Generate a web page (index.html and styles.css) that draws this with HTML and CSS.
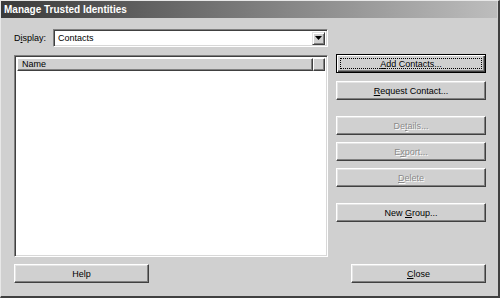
FILE: index.html
```html
<!DOCTYPE html>
<html lang="en">
<head>
    <meta charset="UTF-8" />
    <title>Manage Trusted Identities</title>
    <link rel="stylesheet" href="styles.css">
</head>
<body>

<div class="window">
    <div class="titlebar">Manage Trusted Identities</div>

    <div class="main">
        <div class="left">
            <div class="display-row">
                <label class="label">D<u>i</u>splay:</label>
                <div class="combo">
                    <span class="combo-text">Contacts</span>
                    <span class="combo-btn">
                        <svg width="7" height="4" viewBox="0 0 7 4"><path d="M0 0h7L3.5 4z" fill="#000"/></svg>
                    </span>
                </div>
            </div>
            <div class="list">
                <div class="list-head">
                    <span class="col-name">Name</span>
                    <span class="col-rest"></span>
                </div>
            </div>
        </div>

        <div class="right">
            <button class="btn default"><span class="focus"><u>A</u>dd Contacts...</span></button>
            <button class="btn gap-s"><u>R</u>equest Contact...</button>
            <button class="btn gap-l" disabled>De<u>t</u>ails...</button>
            <button class="btn gap-m" disabled>E<u>x</u>port...</button>
            <button class="btn gap-m" disabled><u>D</u>elete</button>
            <button class="btn gap-l">New <u>G</u>roup...</button>
        </div>
    </div>

    <div class="footer">
        <button class="btn wide">Help</button>
        <button class="btn wide"><u>C</u>lose</button>
    </div>
</div>

</body>
</html>
```

FILE: styles.css
```css
* {
    margin: 0;
    padding: 0;
    box-sizing: border-box;
}
body {
    background-color: #d0d0d0;
    font-family: "Liberation Sans", Arial, sans-serif;
    font-size: 9px;
    color: #000;
}
u {
    text-decoration: underline;
    text-underline-offset: 1px;
}
.window {
    width: 500px;
    height: 298px;
    background-color: #d0d0d0;
    border-top: 1px solid #e8e8e8;
    border-left: 1px solid #e8e8e8;
    border-right: 2px solid #404040;
    border-bottom: 2px solid #404040;
}
.titlebar {
    height: 17px;
    margin-right: 1px;
    padding-left: 3px;
    line-height: 17px;
    font-size: 10px;
    font-weight: bold;
    color: #fff;
    background: linear-gradient(to right, #3a3a3a, #bdbdbd);
}
.main {
    display: flex;
    padding: 11px 0 0 13px;
}
.left {
    width: 314px;
}
.display-row {
    display: flex;
    align-items: center;
    height: 18px;
}
.label {
    width: 39px;
}
.combo {
    flex: 1;
    height: 18px;
    display: flex;
    align-items: center;
    background-color: #fff;
    border-top: 1px solid #808080;
    border-left: 1px solid #808080;
    border-right: 1px solid #fff;
    border-bottom: 1px solid #fff;
    box-shadow: inset 1px 1px 0 #404040, inset -1px -1px 0 #d8d8d8;
    padding: 2px;
}
.combo-text {
    flex: 1;
    padding-left: 2px;
}
.combo-btn {
    width: 13px;
    height: 13px;
    display: flex;
    align-items: center;
    justify-content: center;
    background-color: #d0d0d0;
    border-top: 1px solid #e0e0e0;
    border-left: 1px solid #e0e0e0;
    border-right: 1px solid #404040;
    border-bottom: 1px solid #404040;
    box-shadow: inset 1px 1px 0 #fff, inset -1px -1px 0 #808080;
}
.list {
    margin-top: 8px;
    height: 202px;
    background-color: #fff;
    border-top: 1px solid #808080;
    border-left: 1px solid #808080;
    border-right: 1px solid #fff;
    border-bottom: 1px solid #fff;
    box-shadow: inset 1px 1px 0 #404040, inset -1px -1px 0 #d8d8d8;
    padding: 2px 2px 2px 2px;
}
.list-head {
    display: flex;
    height: 13px;
}
.col-name, .col-rest {
    height: 13px;
    line-height: 11px;
    background-color: #d0d0d0;
    border-top: 1px solid #fff;
    border-left: 1px solid #fff;
    border-right: 1px solid #404040;
    border-bottom: 1px solid #404040;
    box-shadow: inset -1px -1px 0 #808080;
}
.col-name {
    width: 296px;
    padding-left: 4px;
}
.col-rest {
    flex: 1;
}
.right {
    display: flex;
    flex-direction: column;
    margin-left: 8px;
    margin-top: 25px;
    width: 150px;
}
.btn {
    height: 19px;
    font-family: inherit;
    font-size: 9px;
    color: #000;
    background-color: #d0d0d0;
    border-top: 1px solid #fff;
    border-left: 1px solid #fff;
    border-right: 1px solid #404040;
    border-bottom: 1px solid #404040;
    box-shadow: inset -1px -1px 0 #808080, inset 1px 1px 0 #e4e4e4;
}
.btn:disabled {
    color: #8a8a8a;
    text-shadow: 1px 1px 0 #fff;
}
.default {
    border: 1px solid #000;
    box-shadow: inset 1px 1px 0 #fff, inset -1px -1px 0 #404040, inset -2px -2px 0 #808080;
    padding: 3px;
}
.focus {
    display: block;
    height: 11px;
    line-height: 10px;
    border: 1px dotted #000;
}
.gap-s {
    margin-top: 8px;
}
.gap-m {
    margin-top: 7px;
}
.gap-l {
    margin-top: 16px;
}
.footer {
    display: flex;
    justify-content: space-between;
    padding: 7px 12px 0 13px;
}
.wide {
    width: 135px;
}
```
